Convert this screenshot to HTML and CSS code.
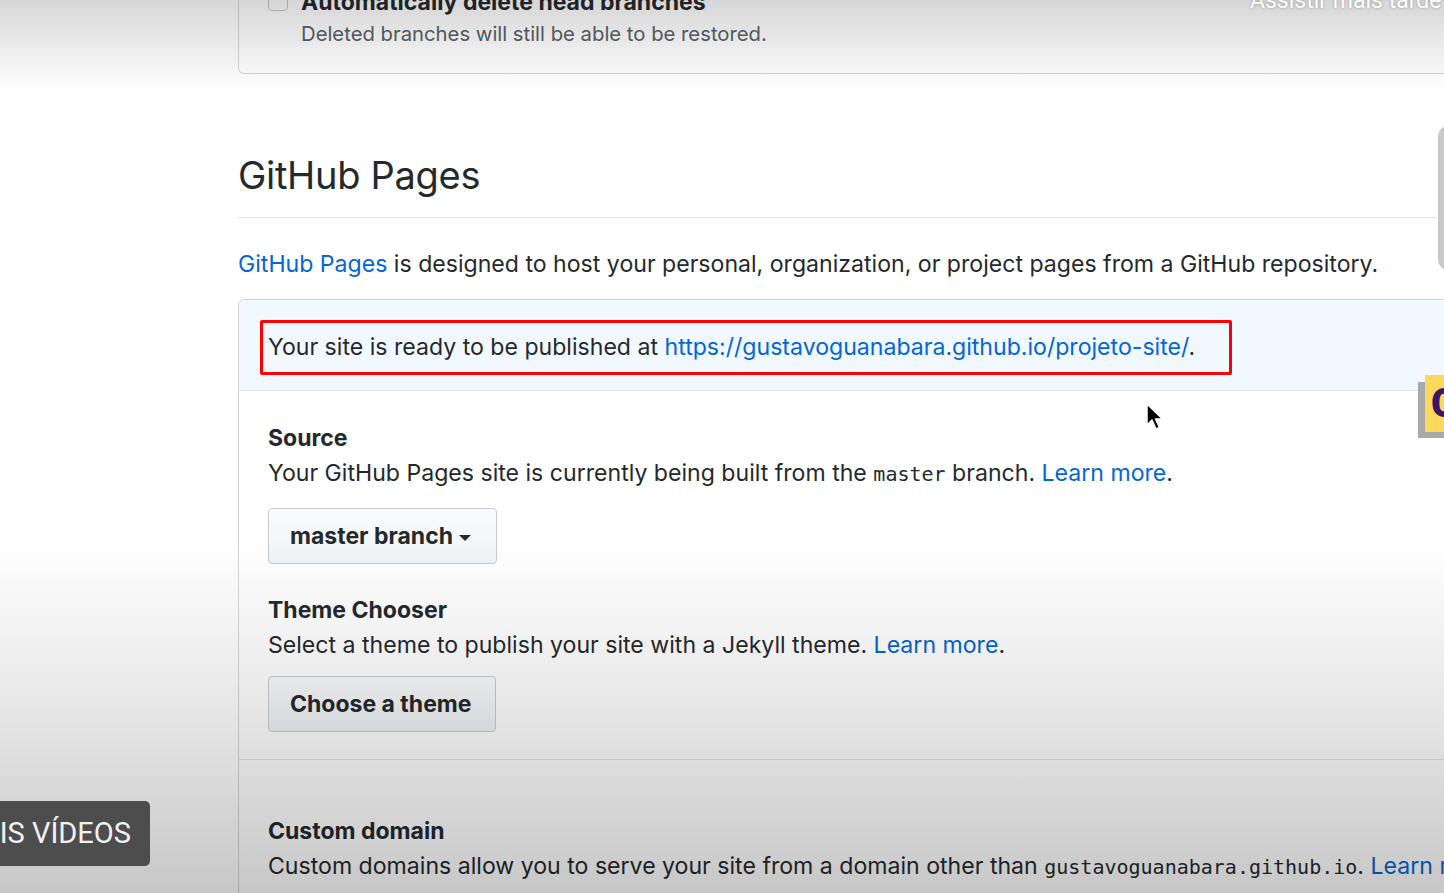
FILE: index.html
```html
<!DOCTYPE html>
<html lang="pt">
<head>
<meta charset="utf-8">
<title>GitHub Pages settings</title>
<link rel="stylesheet" href="styles.css">
</head>
<body>
<div class="page">
  <div class="box top-box">
    <div class="check-row">
      <span class="checkbox"></span>
      <div class="check-text">
        <div class="check-title">Automatically delete head branches</div>
        <div class="check-note">Deleted branches will still be able to be restored.</div>
      </div>
    </div>
  </div>

  <h2 class="section-title">GitHub Pages</h2>
  <p class="intro"><a class="link" href="#">GitHub Pages</a> is designed to host your personal, organization, or project pages from a GitHub repository.</p>

  <div class="box pages-box">
    <div class="notice">
      <div class="highlight">Your site is ready to be published at <a class="link" href="#">https://gustavoguanabara.github.io/projeto-site/</a>.</div>
    </div>
    <div class="pages-body">
      <div class="field-title">Source</div>
      <div class="field-text">Your GitHub Pages site is currently being built from the <code class="mono">master</code> branch. <a class="link" href="#">Learn more</a>.</div>
      <button class="btn btn-source">master branch <span class="caret"></span></button>
      <div class="field-title theme-title">Theme Chooser</div>
      <div class="field-text">Select a theme to publish your site with a Jekyll theme. <a class="link" href="#">Learn more</a>.</div>
      <button class="btn btn-theme">Choose a theme</button>
    </div>
    <div class="pages-domain">
      <div class="field-title">Custom domain</div>
      <div class="field-text nowrap">Custom domains allow you to serve your site from a domain other than <code class="mono">gustavoguanabara.github.io</code>. <a class="link" href="#">Learn more</a>.</div>
    </div>
  </div>
</div>

<div class="shade-top"></div>
<div class="shade-bottom"></div>

<div class="yt-watch-later">Assistir mais tarde</div>
<div class="yt-side-pill"></div>
<div class="yt-card"><span class="yt-card-face">C</span></div>
<div class="yt-more">MAIS VÍDEOS</div>

<svg class="cursor" width="20" height="30" viewBox="0 0 20 30">
  <path d="M1 1 L1 22 L6 17 L10 26 L13.5 24.5 L9.5 16 L16.5 16 Z" fill="#000" stroke="#fff" stroke-width="1.5" stroke-linejoin="round"/>
</svg>
</body>
</html>
```

FILE: styles.css
```css
html, body {
  margin: 0;
  padding: 0;
  width: 1444px;
  height: 893px;
  overflow: hidden;
  background: #ffffff;
}

body {
  position: relative;
  font-family: "Inter", "Noto Sans", sans-serif;
  color: #24292e;
}

.page {
  width: 1300px;
  padding-left: 238px;
}

.box {
  border: 1px solid #d1d5da;
  border-radius: 6px;
  background: #fff;
}

.top-box {
  margin-top: -20px;
  padding: 0 0 24px 29px;
  border-top: none;
  border-top-left-radius: 0;
  border-top-right-radius: 0;
}

.check-row {
  display: flex;
  gap: 13px;
}

.checkbox {
  width: 18px;
  height: 18px;
  margin-top: 11px;
  border: 1px solid #c6c9cc;
  border-radius: 4px;
  background: #fff;
  flex: none;
}

.check-text {
  padding-top: 4px;
}

.check-title {
  font-size: 23px;
  font-weight: 700;
  line-height: 36px;
}

.check-note {
  font-size: 20.3px;
  line-height: 30px;
  color: #586069;
  margin-top: -1px;
}

.section-title {
  margin: 75px 0 0;
  padding-bottom: 16px;
  font-size: 38px;
  font-weight: 400;
  line-height: 52px;
  border-bottom: 1px solid #e1e4e8;
  letter-spacing: -0.3px;
}

.intro {
  margin: 30px 0 19px;
  font-size: 23.1px;
  line-height: 32px;
}

.link {
  color: #0366d6;
  text-decoration: none;
}

.pages-box {
  border-top-right-radius: 0;
  border-bottom-right-radius: 0;
}

.notice {
  background: #f1f8ff;
  border-bottom: 1px solid #d7e3f0;
  padding: 20px 0 15px 21px;
  border-top-left-radius: 6px;
}

.highlight {
  display: inline-block;
  border: 3px solid #ff0000;
  border-radius: 2px;
  padding: 8px 34px 9px 5px;
  font-size: 23.1px;
  line-height: 32px;
}

.pages-body {
  padding: 31px 0 27px 29px;
  border-bottom: 1px solid #e1e4e8;
}

.field-title {
  font-size: 23px;
  font-weight: 700;
  line-height: 32px;
}

.field-text {
  margin-top: 3px;
  font-size: 23.1px;
  line-height: 32px;
}

.nowrap {
  white-space: nowrap;
}

.mono {
  font-family: "DejaVu Sans Mono", "Liberation Mono", monospace;
  font-size: 20px;
}

.btn {
  display: block;
  height: 56px;
  padding: 0 0 0 21px;
  border: 1px solid #c8ccd1;
  border-radius: 4px;
  background: linear-gradient(#fafbfc, #eff3f6);
  font-family: inherit;
  font-size: 23px;
  font-weight: 700;
  color: #24292e;
  text-align: left;
}

.btn-source {
  margin-top: 18px;
  width: 229px;
}

.btn-theme {
  margin-top: 15px;
  width: 228px;
}

.theme-title {
  margin-top: 30px;
}

.caret {
  display: inline-block;
  width: 0;
  height: 0;
  margin-left: 1px;
  vertical-align: middle;
  border-left: 6px solid transparent;
  border-right: 6px solid transparent;
  border-top: 6px solid #24292e;
}

.pages-domain {
  padding: 55px 0 40px 29px;
}

/* video overlays */
.shade-top {
  position: absolute;
  left: 0;
  top: 0;
  width: 1444px;
  height: 90px;
  background: linear-gradient(rgba(0,0,0,0.16), rgba(0,0,0,0));
  pointer-events: none;
}

.shade-bottom {
  position: absolute;
  left: 0;
  top: 540px;
  width: 1444px;
  height: 353px;
  background: linear-gradient(rgba(0,0,0,0), rgba(0,0,0,0.08) 40%, rgba(0,0,0,0.22));
  pointer-events: none;
}

.yt-watch-later {
  position: absolute;
  left: 1250px;
  top: -13px;
  white-space: nowrap;
  font-family: "Roboto", "Liberation Sans", sans-serif;
  font-size: 23px;
  color: #ffffff;
  text-shadow: 0 0 3px rgba(0,0,0,0.35);
}

.yt-side-pill {
  position: absolute;
  left: 1438px;
  top: 125px;
  width: 24px;
  height: 146px;
  border-radius: 12px;
  background: #c9c9c9;
}

.yt-card {
  position: absolute;
  left: 1418px;
  top: 382px;
  width: 40px;
  height: 56px;
  background: #a9a9a9;
}

.yt-card-face {
  position: absolute;
  left: 7px;
  top: -7px;
  width: 40px;
  height: 57px;
  background: #fcd95a;
  color: #3b1469;
  font-family: "Roboto", sans-serif;
  font-weight: 900;
  font-size: 40px;
  line-height: 57px;
  padding-left: 6px;
  box-sizing: border-box;
}

.yt-more {
  position: absolute;
  right: 1294px;
  top: 801px;
  height: 65px;
  padding: 0 19px 0 20px;
  border-radius: 5px;
  background: #4d4d4d;
  color: #f2f2f2;
  font-family: "Roboto", "Liberation Sans", sans-serif;
  font-size: 29px;
  line-height: 65px;
  white-space: nowrap;
}

.cursor {
  position: absolute;
  left: 1146px;
  top: 403px;
}
```
